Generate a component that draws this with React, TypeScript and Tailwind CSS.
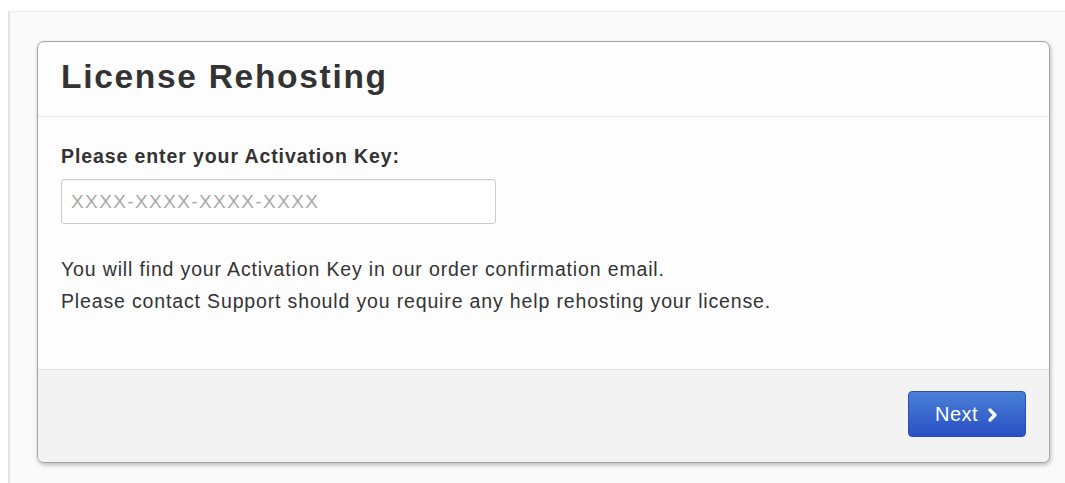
export default function App() {
  return (
    <div className="h-[483px] w-[1065px] bg-white pl-[8px] pt-[11px]" style={{ fontFamily: '"Liberation Sans", Arial, sans-serif' }}>
      <div className="h-full border-l-2 border-t border-l-[#e4e4e4] border-t-[#f0f0f0] bg-[#fafafa] pl-[27px] pr-[15px] pt-[29px]">
        <div className="flex h-[422px] flex-col overflow-hidden rounded-[7px] border border-[#a3a3a3] bg-[#fdfdfd] shadow-[1px_2px_4px_rgba(0,0,0,0.25)]">
          <div className="h-[75px] border-b border-[#e6e6e6] px-[23px] pt-[15px]">
            <h1 className="text-[33.5px] font-bold leading-[40px] tracking-[1.7px] text-[#333]">License Rehosting</h1>
          </div>
          <div className="flex-1 px-[23px] pt-[27px]">
            <label className="block text-[19.5px] font-bold leading-[24px] tracking-[0.9px] text-[#333]">Please enter your Activation Key:</label>
            <input
              placeholder="XXXX-XXXX-XXXX-XXXX"
              className="mt-[11px] h-[45px] w-[435px] rounded-[3px] border border-[#ccc] bg-white px-[9px] text-[19px] tracking-[1.4px] text-[#555] shadow-[inset_0_1px_1px_rgba(0,0,0,0.06)] outline-none placeholder:text-[#aaa]"
            />
            <p className="mt-[29px] text-[19.5px] leading-[32px] tracking-[0.85px] text-[#333]">
              You will find your Activation Key in our order confirmation email.
              <br />
              Please contact Support should you require any help rehosting your license.
            </p>
          </div>
          <div className="flex h-[93px] items-start justify-end border-t border-[#e0e0e0] bg-[#f3f3f3] pr-[23px] pt-[21px]">
            <button className="flex h-[46px] w-[118px] items-center justify-center gap-[9px] rounded-[4px] border border-[#2a4fb8] bg-gradient-to-b from-[#4a80d6] to-[#2b4ec4] text-[20px] tracking-[0.5px] text-white">
              Next
              <svg width="12" height="14" viewBox="0 0 12 14" className="mt-[1px]">
                <path d="M3 2l5 5-5 5" fill="none" stroke="white" strokeWidth="3.2" strokeLinecap="round" strokeLinejoin="round" />
              </svg>
            </button>
          </div>
        </div>
      </div>
    </div>
  )
}
